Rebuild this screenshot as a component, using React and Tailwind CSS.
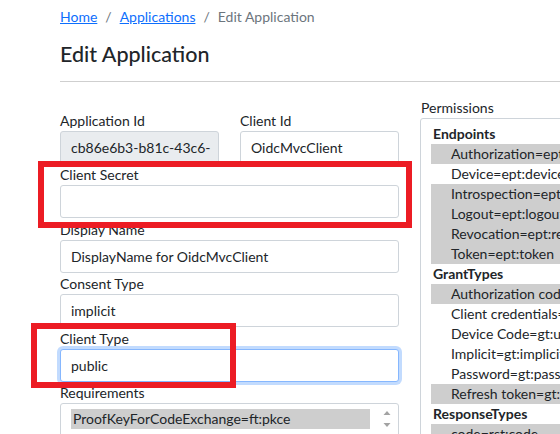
import React from "react";

function Field({ label, value, className = "", boxClass = "" }) {
  return (
    <div className={"flex flex-col " + className}>
      <label className="mt-[1.5px] leading-[20px] text-[14px] text-[#212529] whitespace-nowrap">{label}</label>
      <div className={"h-[33px] rounded-[3px] border px-[10px] flex items-center whitespace-nowrap overflow-hidden " + boxClass}>
        {value}
      </div>
    </div>
  );
}

const perms = [
  { h: "Endpoints" },
  { t: "Authorization=ept:authorization", s: true },
  { t: "Device=ept:device", s: false },
  { t: "Introspection=ept:introspection", s: true },
  { t: "Logout=ept:logout", s: true },
  { t: "Revocation=ept:revocation", s: true },
  { t: "Token=ept:token", s: true },
  { h: "GrantTypes" },
  { t: "Authorization code=gt:authorization_code", s: true },
  { t: "Client credentials=gt:client_credentials", s: false },
  { t: "Device Code=gt:urn:ietf:params:oauth:grant-type:device_code", s: false },
  { t: "Implicit=gt:implicit", s: false },
  { t: "Password=gt:password", s: false },
  { t: "Refresh token=gt:refresh_token", s: true },
  { h: "ResponseTypes" },
  { t: "code=rst:code", s: true },
  { t: "code id_token=rst:code id_token", s: false },
];

export default function App() {
  return (
    <div className="relative w-[560px] h-[434px] overflow-hidden bg-white font-['Lato',sans-serif] text-[14px] text-[#212529]">
      <div className="pl-[60px] pt-[7px]">
        <nav className="flex items-center h-[20px] leading-[20px] text-[14px] whitespace-nowrap">
          <span className="text-[#0d6efd] underline">Home</span>
          <span className="px-2 text-[#6c757d]">/</span>
          <span className="text-[#0d6efd] underline">Applications</span>
          <span className="px-2 text-[#6c757d]">/</span>
          <span className="text-[#6c757d]">Edit Application</span>
        </nav>
        <h2 className="mt-[12.5px] h-[28px] leading-[28px] text-[21.5px] font-medium text-[#212529] whitespace-nowrap">
          Edit Application
        </h2>
        <div className="mt-[13px] h-px bg-[#cfcfcf]" />
        <div className="mt-[16px] flex gap-[21px] items-start">
          <div className="w-[339px] shrink-0 pt-[11.5px] flex flex-col">
            <div className="grid grid-cols-2 gap-[21px]">
              <Field label="Application Id" value="cb86e6b3-b81c-43c6-" boxClass="border-[#ced4da] bg-[#e9ecef]" />
              <Field label="Client Id" value="OidcMvcClient" boxClass="border-[#ced4da] bg-white" />
            </div>
            <Field label="Client Secret" value="" boxClass="border-[#ced4da] bg-white" />
            <Field label="Display Name" value="DisplayName for OidcMvcClient" boxClass="border-[#ced4da] bg-white" />
            <Field label="Consent Type" value="implicit" boxClass="border-[#ced4da] bg-white" />
            <Field label="Client Type" value="public" boxClass="border-[#86b7fe] bg-white ring-[3px] ring-[#0d6efd]/25" />
            <div className="flex flex-col">
              <label className="mt-[1.5px] leading-[20px] whitespace-nowrap">Requirements</label>
              <div className="relative h-[60px] rounded-[3px] border border-[#ced4da] pl-[10px] pr-[28px] pt-[5px]">
                <div className="h-[19.5px] leading-[19.5px] bg-[#cecece] pl-[2px] whitespace-nowrap">
                  ProofKeyForCodeExchange=ft:pkce
                </div>
                <svg className="absolute right-[7px] top-[6px]" width="8" height="6" viewBox="0 0 8 6">
                  <path d="M4 1 L7.5 5 L0.5 5 Z" fill="#a3a3a3" />
                </svg>
                <svg className="absolute right-[7px] top-[18px]" width="8" height="6" viewBox="0 0 8 6">
                  <path d="M0.5 1 L7.5 1 L4 5 Z" fill="#a3a3a3" />
                </svg>
              </div>
            </div>
          </div>
          <div className="w-[200px] shrink-0 flex flex-col">
            <label className="leading-[20px] pl-px whitespace-nowrap">Permissions</label>
            <div className="rounded-[3px] border border-[#ced4da] pl-[10px] pt-[5px] h-[400px] overflow-hidden">
              {perms.map((p, i) =>
                p.h ? (
                  <div key={i} className="h-[20px] leading-[20px] pl-[2px] font-bold whitespace-nowrap">{p.h}</div>
                ) : (
                  <div
                    key={i}
                    className={"h-[20px] leading-[20px] pl-[20px] whitespace-nowrap " + (p.s ? "bg-[#cecece]" : "")}
                  >
                    {p.t}
                  </div>
                )
              )}
            </div>
          </div>
        </div>
      </div>
      <div className="absolute left-[38px] top-[161px] w-[374px] h-[67px] border-[6px] border-[#ec1c24]" />
      <div className="absolute left-[31px] top-[323px] w-[205px] h-[65px] border-[6px] border-[#ec1c24]" />
    </div>
  );
}
